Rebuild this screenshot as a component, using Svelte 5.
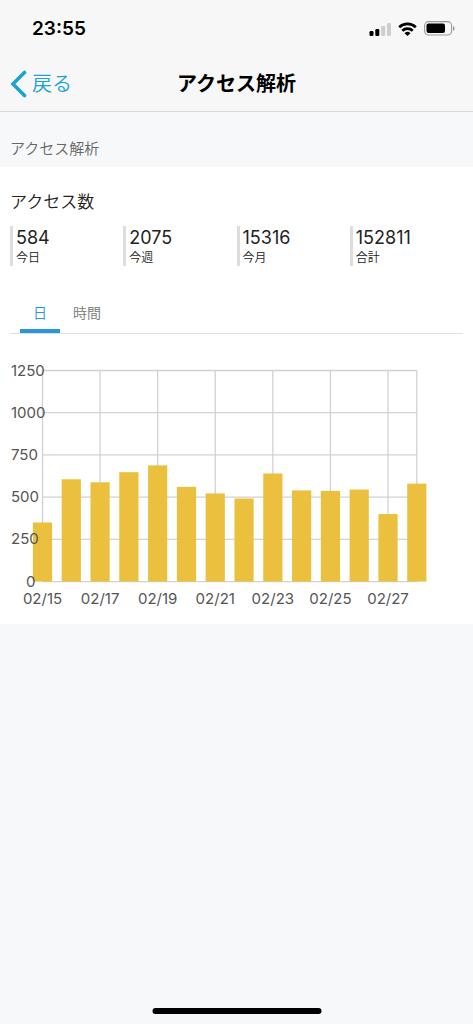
<script>
  const stats = [
    { value: 584, label: '今日' },
    { value: 2075, label: '今週' },
    { value: 15316, label: '今月' },
    { value: 152811, label: '合計' }
  ];

  const days = [
    { date: '02/15', count: 350 },
    { date: '02/16', count: 606 },
    { date: '02/17', count: 588 },
    { date: '02/18', count: 648 },
    { date: '02/19', count: 688 },
    { date: '02/20', count: 561 },
    { date: '02/21', count: 522 },
    { date: '02/22', count: 492 },
    { date: '02/23', count: 640 },
    { date: '02/24', count: 540 },
    { date: '02/25', count: 537 },
    { date: '02/26', count: 545 },
    { date: '02/27', count: 400 },
    { date: '02/28', count: 580 }
  ];

  const ticks = [0, 250, 500, 750, 1000, 1250];
  const max = 1250;
  const plot = { left: 32.5, right: 406.8, top: 20.5, bottom: 231.6 };
  const barWidth = 19.2;

  let tab = $state('day');

  function x(i) {
    return plot.left + (i * (plot.right - plot.left)) / (days.length - 1);
  }

  function y(value) {
    return plot.bottom - (value / max) * (plot.bottom - plot.top);
  }
</script>

<div class="screen">
  <header>
    <div class="status">
      <span class="time">23:55</span>
      <div class="status-icons">
        <svg width="22" height="14" viewBox="0 0 22 14" aria-hidden="true">
          <rect x="0.5" y="9" width="4" height="5" rx="1.2" />
          <rect x="6.3" y="7" width="4" height="7" rx="1.2" />
          <rect x="12.2" y="4" width="4" height="10" rx="1.2" fill="#cdcece" />
          <rect x="18" y="1" width="4" height="13" rx="1.2" fill="#cdcece" />
        </svg>
        <svg width="19" height="14" viewBox="0 0 19 14" aria-hidden="true">
          <g fill="none" stroke="#000" stroke-width="2.7">
            <path d="M1.2 5.300a12 12 0 0 1 16.600 0" />
            <path d="M4.300 8.700a7.500 7.500 0 0 1 10.400 0" />
          </g>
          <path d="M9.500 14 6.500 11.200a4.400 4.400 0 0 1 6 0z" />
        </svg>
        <svg width="31" height="15" viewBox="0 0 31 15" aria-hidden="true">
          <rect x="0.6" y="0.6" width="27" height="13.4" rx="4" fill="none" stroke="#999" stroke-width="1.1" />
          <rect x="2.5" y="2.5" width="18.5" height="9.6" rx="2" />
          <path d="M29 5v4.800c1-.4 1.600-1.300 1.600-2.400S30 5.400 29 5z" fill="#999" />
        </svg>
      </div>
    </div>
    <nav>
      <button class="back">
        <svg width="17" height="28" viewBox="0 0 17 28" aria-hidden="true">
          <path d="M14.500 2.500 3 14l11.500 11.500" fill="none" stroke="#1ba3d3" stroke-width="3.600" stroke-linecap="round" />
        </svg>
        戻る
      </button>
      <h1>アクセス解析</h1>
    </nav>
  </header>

  <main>
    <p class="section-title">アクセス解析</p>

    <section class="panel">
      <h2>アクセス数</h2>
      <div class="stats">
        {#each stats as stat}
          <div class="stat">
            <span class="value">{stat.value}</span>
            <span class="label">{stat.label}</span>
          </div>
        {/each}
      </div>

      <div class="tabs" role="tablist">
        <button role="tab" aria-selected={tab === 'day'} class:active={tab === 'day'} onclick={() => (tab = 'day')}>日</button>
        <button role="tab" aria-selected={tab === 'hour'} class:active={tab === 'hour'} onclick={() => (tab = 'hour')}>時間</button>
      </div>

      <svg class="chart" viewBox="0 0 453 258" role="img" aria-label="アクセス数">
        <g class="grid">
          {#each ticks as tick}
            <line x1={plot.left} x2={plot.right} y1={y(tick)} y2={y(tick)} />
          {/each}
          {#each days as day, i}
            {#if i % 2 === 0}
              <line x1={x(i)} x2={x(i)} y1={plot.top} y2={plot.bottom} />
            {/if}
          {/each}
          <line x1={plot.right} x2={plot.right} y1={plot.top} y2={plot.bottom} />
        </g>
        {#each days as day, i}
          <rect
            class="bar"
            x={x(i) - barWidth / 2}
            y={y(day.count)}
            width={barWidth}
            height={plot.bottom - y(day.count)}
          />
        {/each}
        {#each ticks as tick}
          <text x={tick === 0 ? 16 : 1} y={y(tick) + 5}>{tick}</text>
        {/each}
        {#each days as day, i}
          {#if i % 2 === 0}
            <text class="date" x={x(i)} y={plot.bottom + 22}>{day.date}</text>
          {/if}
        {/each}
      </svg>
    </section>
  </main>

  <div class="home-bar"></div>
</div>

<style>
  :global(body) {
    background: #f7f8fa;
  }

  .screen {
    min-height: 100vh;
    font-family: Inter, "Noto Sans CJK JP", sans-serif;
    color: #222;
  }

  header {
    background: #f7f7f7;
    border-bottom: 1px solid #d9dadb;
  }

  .status {
    display: flex;
    align-items: center;
    justify-content: space-between;
    height: 57px;
    padding: 0 18px 0 32px;
  }

  .time {
    font-size: 19px;
    font-weight: 600;
    color: #000;
  }

  .status-icons {
    display: flex;
    align-items: center;
    gap: 7px;
  }

  nav {
    display: grid;
    grid-template-columns: 1fr auto 1fr;
    align-items: center;
    height: 54px;
    padding: 0 10px;
  }

  button {
    border: 0;
    padding: 0;
    background: none;
    font-family: inherit;
    cursor: pointer;
  }

  .back {
    display: flex;
    align-items: center;
    gap: 5px;
    font-size: 20px;
    line-height: 28px;
    font-weight: 350;
    color: #1ba3d3;
  }

  h1 {
    margin: 0;
    font-size: 20px;
    line-height: 28px;
    font-weight: 600;
    color: #000;
  }

  .section-title {
    margin: 0;
    padding: 26px 10px 7px;
    font-size: 15px;
    line-height: 22px;
    font-weight: 350;
    color: #666;
  }

  .panel {
    padding: 22px 10px 16px;
    background: #fff;
  }

  h2 {
    margin: 0;
    font-size: 17px;
    line-height: 26px;
    font-weight: 350;
  }

  .stats {
    display: grid;
    grid-template-columns: repeat(4, 1fr);
    margin-top: 11px;
  }

  .stat {
    display: flex;
    flex-direction: column;
    height: 40px;
    padding-left: 3px;
    border-left: 3px solid #ddd;
  }

  .value {
    font-size: 18px;
    line-height: 23px;
  }

  .label {
    font-size: 12px;
    line-height: 17px;
    font-weight: 350;
  }

  .tabs {
    display: flex;
    margin-top: 25px;
    padding-left: 10px;
    border-bottom: 1px solid #d8e2e8;
  }

  .tabs button {
    height: 42px;
    padding: 3px 13px 0;
    border-bottom: 4px solid transparent;
    font-size: 14px;
    font-weight: 350;
    color: #777;
  }

  .tabs .active {
    border-bottom-color: #2d93de;
    color: #2d93de;
  }

  .chart {
    display: block;
    width: 100%;
    margin-top: 16px;
  }

  .grid line {
    stroke: #d2d2d2;
    stroke-width: 1.3;
  }

  .bar {
    fill: #ecc03f;
  }

  .chart text {
    font-size: 15px;
    fill: #555;
  }

  .chart .date {
    text-anchor: middle;
  }

  .home-bar {
    position: fixed;
    bottom: 10px;
    left: 50%;
    width: 169px;
    height: 6px;
    border-radius: 3px;
    background: #000;
    transform: translateX(-50%);
  }
</style>
